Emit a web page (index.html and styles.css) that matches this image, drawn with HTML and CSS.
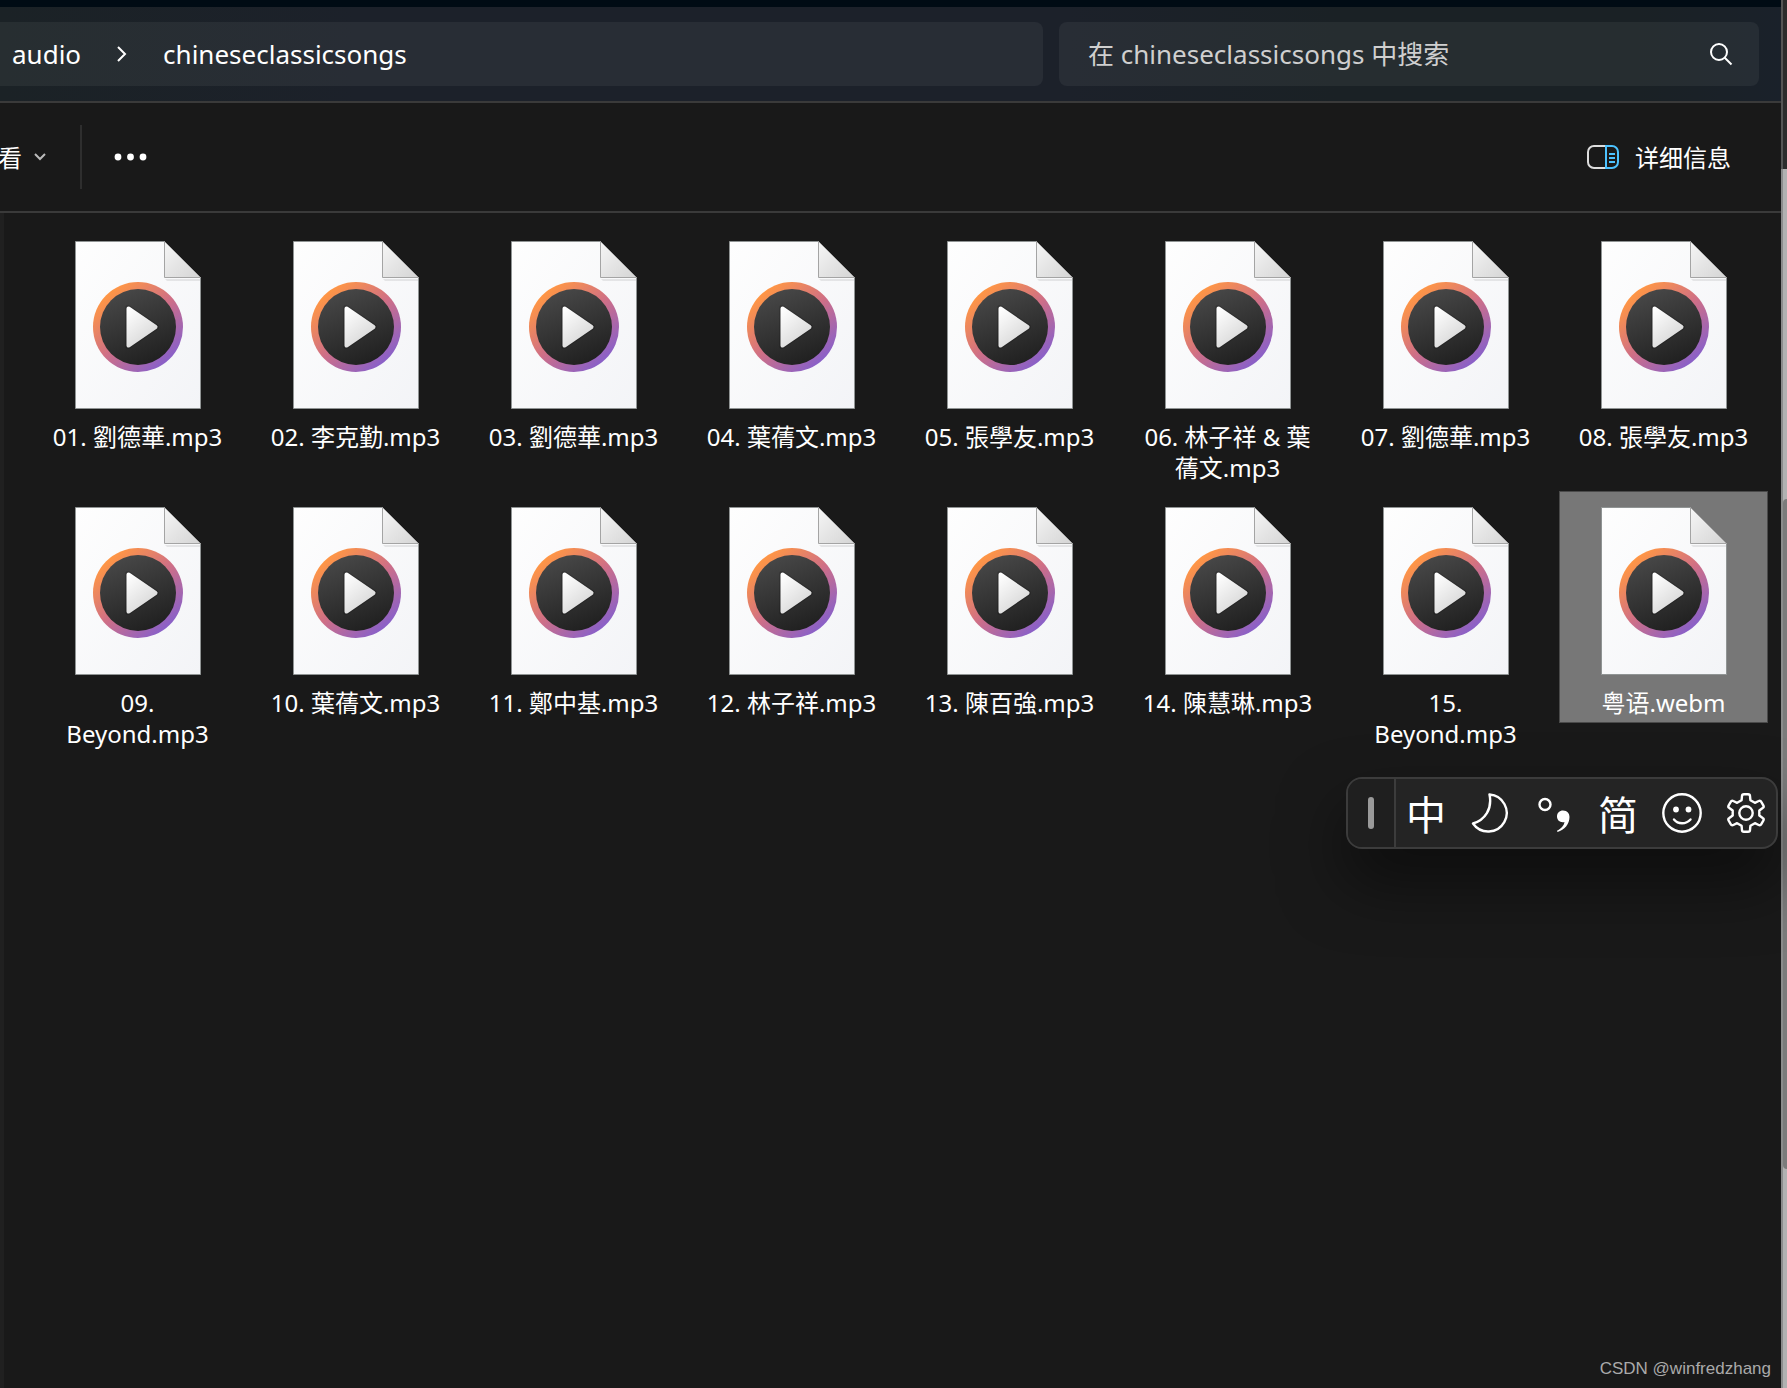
FILE: index.html
```html
<!DOCTYPE html>
<html lang="zh-CN">
<head>
<meta charset="utf-8">
<meta name="viewport" content="width=device-width, initial-scale=1">
<title>chineseclassicsongs</title>
<link rel="stylesheet" href="styles.css">
</head>
<body>
<svg class="defs" aria-hidden="true">
  <defs>
    <linearGradient id="paper" x1="0" y1="0" x2="1" y2="1"><stop offset="0" stop-color="#fefefe"/><stop offset="1" stop-color="#f3f4f7"/></linearGradient>
    <linearGradient id="fold" x1="0" y1="0" x2="1" y2="1"><stop offset="0" stop-color="#f6f6f6"/><stop offset="1" stop-color="#d4d4d4"/></linearGradient>
    <linearGradient id="ring" x1=".15" y1=".15" x2=".8" y2=".9"><stop offset="0" stop-color="#ff9645"/><stop offset=".5" stop-color="#cf6f86"/><stop offset="1" stop-color="#8a60c8"/></linearGradient>
    <linearGradient id="disc" x1=".3" y1="0" x2=".7" y2="1"><stop offset="0" stop-color="#484848"/><stop offset="1" stop-color="#1f1f1f"/></linearGradient>
    <linearGradient id="play" x1="0" y1="0" x2=".6" y2="1"><stop offset="0" stop-color="#ffffff"/><stop offset="1" stop-color="#d8d8d8"/></linearGradient>
    <symbol id="media" viewBox="0 0 126 168">
      <path d="M.5.5H89.5L125.500 36.500V167.500H.5z" fill="url(#paper)" stroke="#909494"/>
      <path d="M90 38h35v2H92z" fill="#000" stroke="none" opacity=".08"/>
      <path d="M89.500.5V36.500H125.500z" fill="url(#fold)" stroke="#a4a4a4"/>
      <circle cx="63" cy="86" r="45" fill="url(#ring)" stroke="none"/>
      <circle cx="63" cy="86" r="38" fill="url(#disc)" stroke="none"/>
      <path d="M53 67 81 86 53 105z" fill="#000" stroke="#000" stroke-width="6" stroke-linejoin="round" opacity=".15"/>
      <path d="M53.500 67.500 80.500 86 53.500 104.500z" fill="url(#play)" stroke="url(#play)" stroke-width="4" stroke-linejoin="round"/>
    </symbol>
  </defs>
</svg>
<div class="desktop">
  <div class="window">
    <header class="address-row">
      <nav class="path" aria-label="路径">
        <a class="crumb" href="#">audio</a>
        <svg class="crumb-sep" viewBox="0 0 12 18" aria-hidden="true"><path d="M2 2l7 7-7 7"/></svg>
        <a class="crumb" href="#">chineseclassicsongs</a>
      </nav>
      <form class="search">
        <input class="search-input" type="search" aria-label="搜索" placeholder="在 chineseclassicsongs 中搜索">
        <button class="search-button" type="button" aria-label="搜索">
          <svg viewBox="0 0 24 24" aria-hidden="true"><circle cx="10" cy="10" r="8"/><path d="M15.500 15.500 22.500 22.500"/></svg>
        </button>
      </form>
    </header>
    <div class="toolbar">
      <button class="view-button" type="button">看
        <svg viewBox="0 0 12 8" aria-hidden="true"><path d="M1 1l5 5 5-5"/></svg>
      </button>
      <span class="divider"></span>
      <button class="more-button" type="button" aria-label="更多">
        <svg viewBox="0 0 34 8" aria-hidden="true"><circle cx="4" cy="4" r="3.400"/><circle cx="16.500" cy="4" r="3.400"/><circle cx="29" cy="4" r="3.400"/></svg>
      </button>
      <button class="details-button" type="button">
        <svg viewBox="0 0 32 24" aria-hidden="true">
          <path class="pane" d="M18 1H7a6 6 0 0 0-6 6v10a6 6 0 0 0 6 6h11"/>
          <path class="side" d="M19 1h6a6 6 0 0 1 6 6v10a6 6 0 0 1-6 6h-6zM22 9h6M22 13h6M22 17h6"/>
        </svg>
        详细信息
      </button>
    </div>
    <main class="files">
      <button class="file" type="button"><svg class="file-icon"><use href="#media"/></svg><span class="file-name">01. 劉德華.mp3</span></button>
      <button class="file" type="button"><svg class="file-icon"><use href="#media"/></svg><span class="file-name">02. 李克勤.mp3</span></button>
      <button class="file" type="button"><svg class="file-icon"><use href="#media"/></svg><span class="file-name">03. 劉德華.mp3</span></button>
      <button class="file" type="button"><svg class="file-icon"><use href="#media"/></svg><span class="file-name">04. 葉蒨文.mp3</span></button>
      <button class="file" type="button"><svg class="file-icon"><use href="#media"/></svg><span class="file-name">05. 張學友.mp3</span></button>
      <button class="file" type="button"><svg class="file-icon"><use href="#media"/></svg><span class="file-name">06. 林子祥 &amp; 葉蒨文.mp3</span></button>
      <button class="file" type="button"><svg class="file-icon"><use href="#media"/></svg><span class="file-name">07. 劉德華.mp3</span></button>
      <button class="file" type="button"><svg class="file-icon"><use href="#media"/></svg><span class="file-name">08. 張學友.mp3</span></button>
      <button class="file" type="button"><svg class="file-icon"><use href="#media"/></svg><span class="file-name">09. Beyond.mp3</span></button>
      <button class="file" type="button"><svg class="file-icon"><use href="#media"/></svg><span class="file-name">10. 葉蒨文.mp3</span></button>
      <button class="file" type="button"><svg class="file-icon"><use href="#media"/></svg><span class="file-name">11. 鄭中基.mp3</span></button>
      <button class="file" type="button"><svg class="file-icon"><use href="#media"/></svg><span class="file-name">12. 林子祥.mp3</span></button>
      <button class="file" type="button"><svg class="file-icon"><use href="#media"/></svg><span class="file-name">13. 陳百強.mp3</span></button>
      <button class="file" type="button"><svg class="file-icon"><use href="#media"/></svg><span class="file-name">14. 陳慧琳.mp3</span></button>
      <button class="file" type="button"><svg class="file-icon"><use href="#media"/></svg><span class="file-name">15. Beyond.mp3</span></button>
      <button class="file selected" type="button"><svg class="file-icon"><use href="#media"/></svg><span class="file-name">粤语.webm</span></button>
    </main>
  </div>
  <div class="behind" aria-hidden="true"><div class="behind-title"></div><div class="behind-track"></div><div class="behind-thumb"></div></div>
</div>
<div class="ime" role="toolbar" aria-label="输入法">
  <div class="ime-grip"><span></span></div>
  <button type="button">中</button>
  <button type="button" aria-label="半角"><svg viewBox="0 0 40 40"><path d="M19.500 1.500A18.500 18.500 0 1 1 3 30.500C15 27 22.500 16 19.500 1.500z"/></svg></button>
  <button type="button" aria-label="标点"><svg viewBox="0 0 40 40"><circle cx="11" cy="11.500" r="5.500"/><path class="solid" d="M29 17.500c4.500 0 6.500 3 6.500 6.500 0 7-5 13-12 15l-.5-1.300c4-2 7-5 7.500-8.700-4 1-7.500-1.500-7.500-5.500 0-3.500 2.500-6 6-6z"/></svg></button>
  <button type="button">简</button>
  <button type="button" aria-label="表情"><svg viewBox="0 0 40 40"><circle cx="20" cy="20" r="18.700"/><circle class="solid" cx="14" cy="16.500" r="2.900"/><circle class="solid" cx="26.500" cy="16.500" r="2.900"/><path d="M12 26.500c4 5 12 5 16.500 0"/></svg></button>
  <button type="button" aria-label="设置"><svg viewBox="0 0 40 40"><circle cx="20" cy="20" r="6.700"/><path d="M24 3 24.400 7.200 28.900 9.800 32.700 8Q34.300 7.100 35.300 8.900L37.300 12.300Q38.300 14.100 36.700 15L33.300 17.400V22.600L36.700 25Q38.300 25.900 37.300 27.700L35.300 31.100Q34.300 32.900 32.700 32L28.900 30.200 24.400 32.800 24 37Q24 38.800 22 38.800H18Q16 38.800 16 37L15.600 32.800 11.100 30.200 7.300 32Q5.700 32.900 4.700 31.100L2.700 27.700Q1.700 25.900 3.300 25L6.700 22.600V17.400L3.300 15Q1.700 14.100 2.700 12.300L4.700 8.900Q5.700 7.100 7.300 8L11.100 9.800 15.600 7.200 16 3Q16 1.200 18 1.200H22Q24 1.200 24 3z"/></svg></button>
</div>
<p class="watermark">CSDN @winfredzhang</p>
</body>
</html>
```
FILE: styles.css
```css
* {
  box-sizing: border-box;
}

body {
  margin: 0;
  position: relative;
  background: #191919;
  color: #fff;
  font-family: "Noto Sans", "Noto Sans CJK SC", sans-serif;
  font-size: 24px;
  line-height: 31px;
}

button,
input {
  font: inherit;
  color: inherit;
  border: 0;
  background: none;
  padding: 0;
  margin: 0;
}

svg {
  fill: none;
  stroke: currentColor;
  stroke-width: 2;
}

.defs {
  position: absolute;
  width: 0;
  height: 0;
}

.desktop {
  display: flex;
  min-height: 100vh;
}

.window {
  flex: 1;
  min-width: 0;
  display: flex;
  flex-direction: column;
  border-top: 7px solid #000b14;
}

/* Address bar and search */
.address-row {
  display: flex;
  gap: 16px;
  padding: 15px 22px 15px 0;
  background: linear-gradient(90deg, #1b2226, #1c212a 20%, #1c212a 60%, #1a2125 75%, #1a2125 92%, #1a212a);
  border-bottom: 2px solid #3a3a3a;
  font-size: 26px;
}

.path,
.search {
  display: flex;
  align-items: center;
  height: 64px;
  background: rgba(255, 255, 255, 0.055);
}

.path {
  flex: 3 1 0;
  padding-left: 12px;
  border-radius: 0 8px 8px 0;
}

.crumb {
  color: #fff;
  text-decoration: none;
}

.crumb-sep {
  width: 12px;
  height: 18px;
  margin: 0 35px;
}

.search {
  flex: 0 0 700px;
  padding: 0 26px 0 29px;
  border-radius: 8px;
}

.search-input {
  flex: 1;
  min-width: 0;
  outline: 0;
  appearance: none;
}

.search-input::placeholder {
  color: #cfcfcf;
  opacity: 1;
}

.search-button svg {
  display: block;
  width: 24px;
  height: 24px;
}

/* Command bar */
.toolbar {
  display: flex;
  align-items: center;
  height: 110px;
  border-bottom: 2px solid #3a3a3a;
}

.view-button {
  display: flex;
  align-items: center;
  gap: 12px;
  margin-left: -2px;
}

.view-button svg {
  width: 12px;
  height: 8px;
  color: #bbb;
}

.divider {
  width: 2px;
  height: 64px;
  margin: 0 32px 0 34px;
  background: #2e2e2e;
}

.more-button svg {
  display: block;
  width: 34px;
  height: 8px;
  fill: #fff;
  stroke: none;
}

.details-button {
  display: flex;
  align-items: center;
  gap: 16px;
  margin: 0 50px 0 auto;
}

.details-button svg {
  width: 32px;
  height: 24px;
}

.pane {
  stroke: #ddd;
}

.side {
  stroke: #4cc2ff;
}

/* File grid */
.files {
  flex: 1;
  display: grid;
  grid-template-columns: repeat(auto-fill, 209px);
  grid-auto-rows: 257px;
  gap: 9px;
  align-content: start;
  align-items: start;
  padding: 12px 12px 12px 29px;
  border-left: 4px solid #202020;
}

.file {
  display: flex;
  flex-direction: column;
  align-items: center;
  gap: 12px;
  padding: 15px 15px 4px;
  border: 1px solid transparent;
}

.file.selected {
  background: #777;
  border-color: #4a4a4a;
}

.file-icon {
  width: 126px;
  height: 168px;
  stroke-width: 1;
}

/* Windows behind the right edge */
.behind {
  width: 6px;
  display: flex;
  flex-direction: column;
  border-left: 2px solid #8c8c8c;
  background: #b1b1b1;
}

.behind-title {
  height: 169px;
  margin-left: -2px;
  border-left: 2px solid #555;
  background: #2c2c2c;
}

.behind-track {
  height: 330px;
}

.behind-thumb {
  height: 670px;
  border-radius: 6px 0 0 6px;
  background: #7b7b7b;
}

/* Input method bar */
.ime {
  position: absolute;
  top: 777px;
  right: 9px;
  display: flex;
  align-items: center;
  width: 432px;
  height: 72px;
  border: 2px solid #3c3c3c;
  border-radius: 16px;
  background: #242424;
  box-shadow: 0 32px 64px rgba(0, 0, 0, 0.5);
  overflow: hidden;
}

.ime-grip {
  display: flex;
  flex: none;
  align-items: center;
  justify-content: center;
  width: 48px;
  height: 100%;
  margin-right: -2px;
  background: #1f1f1f;
  border-right: 2px solid #3c3c3c;
}

.ime-grip span {
  width: 6px;
  height: 32px;
  border-radius: 3px;
  background: #9a9a9a;
}

.ime button {
  display: flex;
  flex: none;
  align-items: center;
  justify-content: center;
  width: 64px;
  font-family: "Noto Sans CJK SC", sans-serif;
  font-size: 40px;
  line-height: 64px;
}

.ime svg {
  width: 40px;
  height: 40px;
  stroke-width: 2.4;
  stroke-linejoin: round;
  stroke-linecap: round;
}

.ime .solid {
  fill: #fff;
  stroke: none;
}

.watermark {
  position: absolute;
  right: 16px;
  bottom: 7px;
  margin: 0;
  color: #aaa;
  font: 17px/24px "Liberation Sans", sans-serif;
}
```
